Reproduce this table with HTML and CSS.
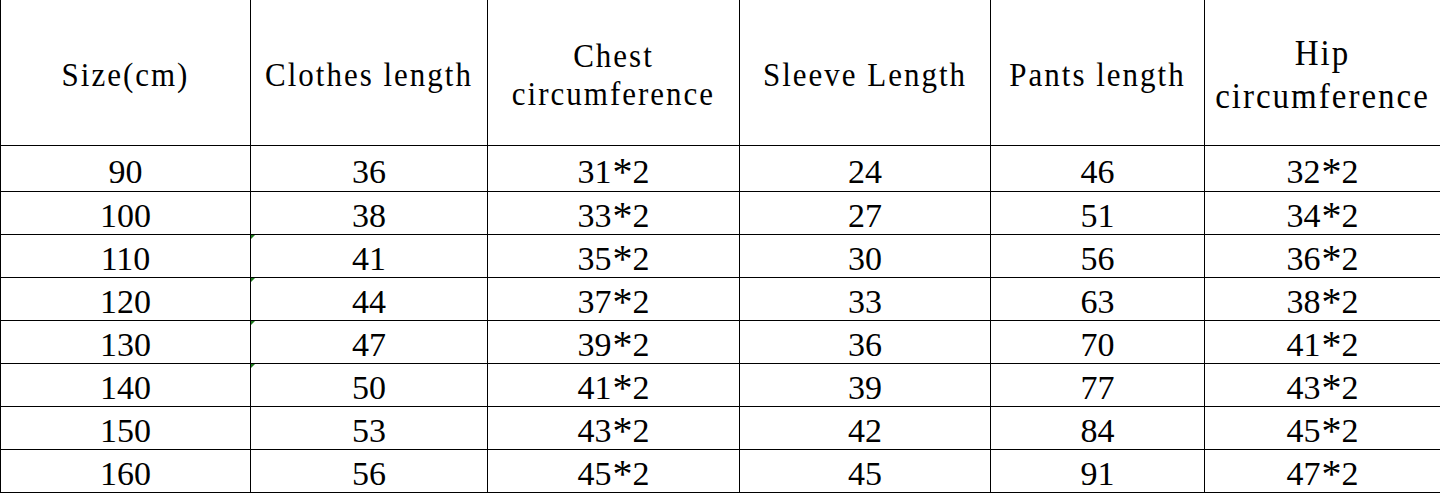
FILE: index.html
```html
<!DOCTYPE html>
<html>
<head>
<meta charset="utf-8">
<link rel="stylesheet" href="styles.css">
</head>
<body>
<div class="sheet">
  <div class="cell head first"><span class="label">Size(cm)</span></div>
  <div class="cell head"><span class="label">Clothes length</span></div>
  <div class="cell head"><span class="label">Chest<br>circumference</span></div>
  <div class="cell head"><span class="label">Sleeve Length</span></div>
  <div class="cell head"><span class="label">Pants length</span></div>
  <div class="cell head"><span class="label wide">Hip<br>circumference</span></div>

  <div class="cell num first">90</div><div class="cell num">36</div><div class="cell num">31<span class="ast">*</span>2</div><div class="cell num">24</div><div class="cell num">46</div><div class="cell num">32<span class="ast">*</span>2</div>
  <div class="cell num first">100</div><div class="cell num">38</div><div class="cell num">33<span class="ast">*</span>2</div><div class="cell num">27</div><div class="cell num">51</div><div class="cell num">34<span class="ast">*</span>2</div>
  <div class="cell num first">110</div><div class="cell num flag">41</div><div class="cell num">35<span class="ast">*</span>2</div><div class="cell num">30</div><div class="cell num">56</div><div class="cell num">36<span class="ast">*</span>2</div>
  <div class="cell num first">120</div><div class="cell num flag">44</div><div class="cell num">37<span class="ast">*</span>2</div><div class="cell num">33</div><div class="cell num">63</div><div class="cell num">38<span class="ast">*</span>2</div>
  <div class="cell num first">130</div><div class="cell num flag">47</div><div class="cell num">39<span class="ast">*</span>2</div><div class="cell num">36</div><div class="cell num">70</div><div class="cell num">41<span class="ast">*</span>2</div>
  <div class="cell num first">140</div><div class="cell num flag">50</div><div class="cell num">41<span class="ast">*</span>2</div><div class="cell num">39</div><div class="cell num">77</div><div class="cell num">43<span class="ast">*</span>2</div>
  <div class="cell num first">150</div><div class="cell num">53</div><div class="cell num">43<span class="ast">*</span>2</div><div class="cell num">42</div><div class="cell num">84</div><div class="cell num">45<span class="ast">*</span>2</div>
  <div class="cell num first">160</div><div class="cell num">56</div><div class="cell num">45<span class="ast">*</span>2</div><div class="cell num">45</div><div class="cell num">91</div><div class="cell num">47<span class="ast">*</span>2</div>
</div>
</body>
</html>
```
FILE: styles.css
```css
html, body {
  margin: 0;
  padding: 0;
  background: #ffffff;
  overflow: hidden;
}

.sheet {
  display: grid;
  grid-template-columns: 251px 237px 252px 251px 214px 236px;
  grid-template-rows: 146px 46px repeat(7, 43px);
  width: 1441px;
  color: #000;
}

.cell {
  box-sizing: border-box;
  border-right: 1px solid #000;
  border-bottom: 1px solid #000;
  display: flex;
  align-items: center;
  justify-content: center;
  text-align: center;
  position: relative;
}

.cell.first {
  border-left: 1px solid #000;
}

.head {
  padding-top: 5px;
  font-family: "Liberation Serif", "Times New Roman", serif;
  font-size: 31px;
}

.label {
  display: inline-block;
  line-height: 34px;
  letter-spacing: 2px;
  white-space: nowrap;
  transform: scaleY(1.12);
  transform-origin: center;
}

.label.wide {
  font-size: 33px;
  line-height: 39px;
  letter-spacing: 2px;
  transform: scaleY(1.1);
}

.num {
  padding-top: 6px;
  font-family: "Liberation Serif", "Times New Roman", serif;
  font-size: 34px;
  line-height: 34px;
}

.ast {
  display: inline-block;
  font-size: 40px;
  line-height: 34px;
  vertical-align: -0.2em;
  margin: 0 0 0 1px;
}

.flag::before {
  content: "";
  position: absolute;
  left: 0;
  top: 0;
  width: 0;
  height: 0;
  border-top: 4px solid #1e7a1e;
  border-right: 4px solid transparent;
}
```
